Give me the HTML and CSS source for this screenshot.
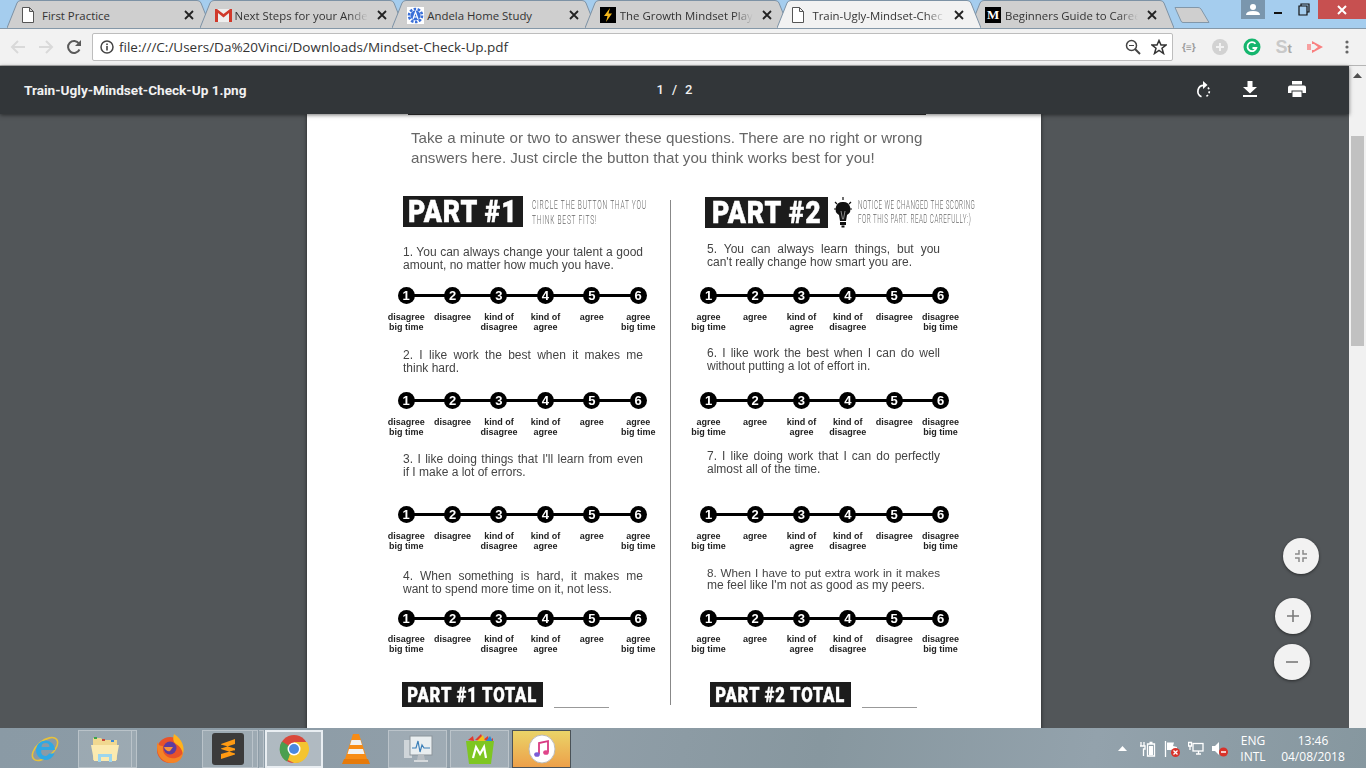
FILE: index.html
```html
<!DOCTYPE html>
<html lang="en">
<head>
<meta charset="utf-8">
<title>Mindset-Check-Up.pdf</title>
<link rel="stylesheet" href="styles.css">
</head>
<body>
<svg class="defs" width="0" height="0" aria-hidden="true">
  <symbol id="tabshape" viewBox="0 0 204 28" preserveAspectRatio="none">
    <path d="M0 28 L10 3 Q11 .5 14 .5 L190 .5 Q193 .5 194 3 L204 28"/>
  </symbol>
  <symbol id="docicon" viewBox="0 0 12 16">
    <path d="M.5.5H7.5L11.5 4.5V15.5H.5ZM7.5.5V4.5H11.5" fill="#fff" stroke="#555" stroke-width="1"/>
  </symbol>
  <symbol id="closeicon" viewBox="0 0 10 10">
    <path d="M1 1L9 9M9 1L1 9" stroke="#222" stroke-width="1.8" fill="none"/>
  </symbol>
</svg>

<header class="tabbar">
  <div class="tab">
    <svg class="tab-shape"><use href="#tabshape"/></svg>
    <span class="favicon"><svg class="doc" width="12" height="16"><use href="#docicon"/></svg></span>
    <span class="tab-title">First Practice</span>
    <svg class="tab-close" width="10" height="10"><use href="#closeicon"/></svg>
  </div>
  <div class="tab">
    <svg class="tab-shape"><use href="#tabshape"/></svg>
    <span class="favicon"><svg width="17" height="14" viewBox="0 0 17 14"><rect y="1" width="17" height="13" fill="#eee"/><path d="M0 1V14H3V5L8.500 9.500L14 5V14H17V1H15L8.500 6L2 1Z" fill="#d0392b"/></svg></span>
    <span class="tab-title fade">Next Steps for your Ande</span>
    <svg class="tab-close" width="10" height="10"><use href="#closeicon"/></svg>
  </div>
  <div class="tab">
    <svg class="tab-shape"><use href="#tabshape"/></svg>
    <span class="favicon"><svg width="17" height="17" viewBox="0 0 17 17"><rect width="17" height="17" fill="#fff"/><circle cx="8.500" cy="8.500" r="6.500" fill="none" stroke="#3a6fd8" stroke-width="2.600" stroke-dasharray="2.500 1.500"/><circle cx="8.500" cy="8.500" r="5" fill="#3a6fd8"/><path d="M6 12L8.500 5L11 12M7 10H10" stroke="#fff" stroke-width="1.200" fill="none"/></svg></span>
    <span class="tab-title">Andela Home Study</span>
    <svg class="tab-close" width="10" height="10"><use href="#closeicon"/></svg>
  </div>
  <div class="tab">
    <svg class="tab-shape"><use href="#tabshape"/></svg>
    <span class="favicon"><svg width="16" height="16" viewBox="0 0 16 16"><rect width="16" height="16" fill="#000"/><path d="M10 1L4 9H7.500L6 15L12 6.500H8.500Z" fill="#f5b81c"/></svg></span>
    <span class="tab-title fade">The Growth Mindset Play</span>
    <svg class="tab-close" width="10" height="10"><use href="#closeicon"/></svg>
  </div>
  <div class="tab active">
    <svg class="tab-shape"><use href="#tabshape"/></svg>
    <span class="favicon"><svg class="doc" width="12" height="16"><use href="#docicon"/></svg></span>
    <span class="tab-title fade">Train-Ugly-Mindset-Chec</span>
    <svg class="tab-close" width="10" height="10"><use href="#closeicon"/></svg>
  </div>
  <div class="tab">
    <svg class="tab-shape"><use href="#tabshape"/></svg>
    <span class="favicon medium">M</span>
    <span class="tab-title fade">Beginners Guide to Caree</span>
    <svg class="tab-close" width="10" height="10"><use href="#closeicon"/></svg>
  </div>
  <svg class="newtab" width="36" height="18" viewBox="0 0 36 18"><path d="M1 1.500H24Q26 1.500 27 3L35 16.500H9Q7.500 16.500 7 15Z" fill="#cfcfcf" stroke="#8297a9"/></svg>
  <div class="winctl">
    <span class="profile"><svg width="14" height="14" viewBox="0 0 14 14"><circle cx="7" cy="4" r="3" fill="#fff"/><path d="M0 12Q0 8 7 8Q14 8 14 12Z" fill="#fff"/></svg></span>
    <span class="wbtn"><svg width="12" height="12" viewBox="0 0 12 12"><rect x="2" y="8" width="8" height="2" fill="#111"/></svg></span>
    <span class="wbtn"><svg width="12" height="14" viewBox="0 0 12 14"><path d="M3 3V1H11V9H9M1 3H9V12H1Z" fill="none" stroke="#111" stroke-width="1.200"/></svg></span>
    <span class="wclose"><svg width="12" height="12" viewBox="0 0 12 12"><path d="M2 2L10 10M10 2L2 10" stroke="#fff" stroke-width="2"/></svg></span>
  </div>
</header>

<nav class="toolbar">
  <span class="navbtn"><svg width="16" height="16" viewBox="0 0 16 16"><path d="M15 8H2M8 2L2 8L8 14" fill="none" stroke="#d9d9d9" stroke-width="2"/></svg></span>
  <span class="navbtn"><svg width="16" height="16" viewBox="0 0 16 16"><path d="M1 8H14M8 2L14 8L8 14" fill="none" stroke="#d9d9d9" stroke-width="2"/></svg></span>
  <span class="navbtn"><svg width="16" height="16" viewBox="0 0 16 16"><path d="M13.500 10.500A6 6 0 1 1 13 4.500" fill="none" stroke="#5a5a5a" stroke-width="2"/><path d="M15 1V7H9Z" fill="#5a5a5a"/></svg></span>
  <div class="omnibox">
    <svg class="info" width="14" height="14" viewBox="0 0 14 14"><circle cx="7" cy="7" r="6" fill="none" stroke="#444" stroke-width="1.500"/><rect x="6.200" y="6" width="1.600" height="4.500" fill="#444"/><rect x="6.200" y="3.500" width="1.600" height="1.600" fill="#444"/></svg>
    <span class="url">file:///C:/Users/Da%20Vinci/Downloads/Mindset-Check-Up.pdf</span>
    <svg width="16" height="16" viewBox="0 0 16 16"><circle cx="6.500" cy="6.500" r="5" fill="none" stroke="#444" stroke-width="1.500"/><path d="M10 10L15 15" stroke="#444" stroke-width="2"/><path d="M4 6.500H9" stroke="#444"/></svg>
    <svg class="star" width="16" height="16" viewBox="0 0 16 16"><path d="M8 1.500L10 6H15L11 9.200L12.500 14.500L8 11.500L3.500 14.500L5 9.200L1 6H6Z" fill="none" stroke="#333" stroke-width="1.500"/></svg>
  </div>
  <div class="exts">
    <span class="ext braces">{≡}</span>
    <span class="ext"><svg width="18" height="18" viewBox="0 0 18 18"><circle cx="9" cy="9" r="8" fill="#d2d2d2"/><path d="M9 5V13M5 9H13" stroke="#f2f2f2" stroke-width="2"/></svg></span>
    <span class="ext"><svg width="18" height="18" viewBox="0 0 18 18"><circle cx="9" cy="9" r="8.500" fill="#15b66e"/><path d="M12.500 5.800A4.500 4.500 0 1 0 13.300 10H9.500" fill="none" stroke="#fff" stroke-width="1.800"/></svg></span>
    <span class="ext st">S<small>t</small></span>
    <span class="ext"><svg width="18" height="14" viewBox="0 0 18 14"><path d="M1 4H5V10H1Z" fill="#f7a0a0"/><path d="M6 1L17 7L6 13V10H8L12 7L8 4H6Z" fill="#f98080"/></svg></span>
    <span class="ext"><svg width="4" height="14" viewBox="0 0 4 14"><circle cx="2" cy="2" r="1.600" fill="#666"/><circle cx="2" cy="7" r="1.600" fill="#666"/><circle cx="2" cy="12" r="1.600" fill="#666"/></svg></span>
  </div>
</nav>

<div class="main">
  <div class="content">
    <div class="pdfbar">
      <div class="pdftitle">Train-Ugly-Mindset-Check-Up 1.png</div>
      <div class="pagecount"><span>1</span><span>/</span><span>2</span></div>
      <div class="pdfactions">
        <span class="pdfbtn"><svg width="16" height="18" viewBox="0 0 16 18"><path d="M9 4.300A6 6 0 0 0 6.500 15.800" fill="none" stroke="#fff" stroke-width="1.700"/><path d="M8 0V8L12.500 4Z" fill="#fff"/><path d="M13 6.500A6 6 0 0 1 10.500 15.800" fill="none" stroke="#fff" stroke-width="1.700" stroke-dasharray="2 2"/></svg></span>
        <span class="pdfbtn"><svg width="14" height="16" viewBox="0 0 14 16"><path d="M4.500 0H9.500V6H14L7 12.500L0 6H4.500Z" fill="#fff"/><rect y="14" width="14" height="2" fill="#fff"/></svg></span>
        <span class="pdfbtn"><svg width="18" height="16" viewBox="0 0 18 16"><path d="M4 0H14V3.500H4ZM2 4.500H16Q18 4.500 18 6.500V12H14.500V9.500H3.500V12H0V6.500Q0 4.500 2 4.500ZM4.500 10.500H13.500V16H4.500Z" fill="#fff"/></svg></span>
      </div>
    </div>

    <div class="viewer">
      <article class="page">
        <div class="page-inner">
          <div class="headrule"></div>
          <p class="intro"><span class="l1">Take a minute or two to answer these questions. There are no right or wrong</span> answers here. Just circle the button that you think works best for you!</p>

          <div class="cols">
            <section class="col col-left">
              <div class="parthead">
                <div class="badge"><span>PART #1</span></div>
                <div class="note note-left"><span>CIRCLE THE BUTTON THAT YOU</span><span>THINK BEST FITS!</span></div>
              </div>

              <div class="q q1">
                <p class="qtext"><span class="l1">1. You can always change your talent a good</span> amount, no matter how much you have.</p>
                <div class="scale">
                  <div class="dots"><b>1</b><b>2</b><b>3</b><b>4</b><b>5</b><b>6</b></div>
                  <div class="labels"><span>disagree big time</span><span>disagree</span><span>kind of disagree</span><span>kind of agree</span><span>agree</span><span>agree big time</span></div>
                </div>
              </div>
              <div class="q q2">
                <p class="qtext"><span class="l1">2. I like work the best when it makes me</span> think hard.</p>
                <div class="scale">
                  <div class="dots"><b>1</b><b>2</b><b>3</b><b>4</b><b>5</b><b>6</b></div>
                  <div class="labels"><span>disagree big time</span><span>disagree</span><span>kind of disagree</span><span>kind of agree</span><span>agree</span><span>agree big time</span></div>
                </div>
              </div>
              <div class="q q3">
                <p class="qtext"><span class="l1">3. I like doing things that I'll learn from even</span> if I make a lot of errors.</p>
                <div class="scale">
                  <div class="dots"><b>1</b><b>2</b><b>3</b><b>4</b><b>5</b><b>6</b></div>
                  <div class="labels"><span>disagree big time</span><span>disagree</span><span>kind of disagree</span><span>kind of agree</span><span>agree</span><span>agree big time</span></div>
                </div>
              </div>
              <div class="q q4">
                <p class="qtext"><span class="l1">4. When something is hard, it makes me</span> want to spend more time on it, not less.</p>
                <div class="scale">
                  <div class="dots"><b>1</b><b>2</b><b>3</b><b>4</b><b>5</b><b>6</b></div>
                  <div class="labels"><span>disagree big time</span><span>disagree</span><span>kind of disagree</span><span>kind of agree</span><span>agree</span><span>agree big time</span></div>
                </div>
              </div>

              <div class="total total-left">
                <div class="totalbadge"><span>PART #1 TOTAL</span></div>
                <div class="blank"></div>
              </div>
            </section>

            <div class="divider"></div>

            <section class="col col-right">
              <div class="parthead">
                <div class="badge badge-right"><span>PART #2</span></div>
                <svg class="bulb" width="18" height="31" viewBox="0 0 18 31"><path d="M1 5L3 7M9 0V3M17 5L15 7M0 12H2M16 12H18" stroke="#111" stroke-width="1.200"/><path d="M9 5A7 7 0 0 0 5 18L6 24H12L13 18A7 7 0 0 0 9 5Z" fill="#111"/><path d="M7 14L8.500 22H9.500L11 14" stroke="#888" fill="none"/><rect x="6" y="25" width="6" height="3" fill="#111"/><rect x="7.500" y="28.500" width="3" height="2" fill="#111"/></svg>
                <div class="note note-right"><span>NOTICE WE CHANGED THE SCORING</span><span>FOR THIS PART. READ CAREFULLY:)</span></div>
              </div>

              <div class="q q5">
                <p class="qtext"><span class="l1">5. You can always learn things, but you</span> can't really change how smart you are.</p>
                <div class="scale">
                  <div class="dots"><b>1</b><b>2</b><b>3</b><b>4</b><b>5</b><b>6</b></div>
                  <div class="labels"><span>agree big time</span><span>agree</span><span>kind of agree</span><span>kind of disagree</span><span>disagree</span><span>disagree big time</span></div>
                </div>
              </div>
              <div class="q q6">
                <p class="qtext"><span class="l1">6. I like work the best when I can do well</span> without putting a lot of effort in.</p>
                <div class="scale">
                  <div class="dots"><b>1</b><b>2</b><b>3</b><b>4</b><b>5</b><b>6</b></div>
                  <div class="labels"><span>agree big time</span><span>agree</span><span>kind of agree</span><span>kind of disagree</span><span>disagree</span><span>disagree big time</span></div>
                </div>
              </div>
              <div class="q q7">
                <p class="qtext"><span class="l1">7. I like doing work that I can do perfectly</span> almost all of the time.</p>
                <div class="scale">
                  <div class="dots"><b>1</b><b>2</b><b>3</b><b>4</b><b>5</b><b>6</b></div>
                  <div class="labels"><span>agree big time</span><span>agree</span><span>kind of agree</span><span>kind of disagree</span><span>disagree</span><span>disagree big time</span></div>
                </div>
              </div>
              <div class="q q8">
                <p class="qtext"><span class="l1 tight">8. When I have to put extra work in it makes</span> me feel like I'm not as good as my peers.</p>
                <div class="scale">
                  <div class="dots"><b>1</b><b>2</b><b>3</b><b>4</b><b>5</b><b>6</b></div>
                  <div class="labels"><span>agree big time</span><span>agree</span><span>kind of agree</span><span>kind of disagree</span><span>disagree</span><span>disagree big time</span></div>
                </div>
              </div>

              <div class="total total-right">
                <div class="totalbadge"><span>PART #2 TOTAL</span></div>
                <div class="blank"></div>
              </div>
            </section>
          </div>
        </div>
      </article>

      <button class="fab fab-fit" type="button"><svg width="14" height="14" viewBox="0 0 14 14"><path d="M5 1V5H1M9 1V5H13M5 13V9H1M9 13V9H13" fill="none" stroke="#8a8a8a" stroke-width="1.500"/></svg></button>
      <button class="fab fab-plus" type="button"><svg width="14" height="14" viewBox="0 0 14 14"><path d="M7 1V13M1 7H13" stroke="#7a7a7a" stroke-width="1.600"/></svg></button>
      <button class="fab fab-minus" type="button"><svg width="14" height="14" viewBox="0 0 14 14"><path d="M1 7H13" stroke="#7a7a7a" stroke-width="1.600"/></svg></button>
    </div>
  </div>

  <aside class="scrollbar">
    <svg class="scroll-up" width="9" height="5" viewBox="0 0 9 5"><path d="M4.500 0L9 5H0Z" fill="#505050"/></svg>
    <div class="thumb"></div>
  </aside>
</div>

<footer class="taskbar">
  <div class="tb-apps">
    <span class="app app-ie"><svg width="32" height="32" viewBox="0 0 32 32"><ellipse cx="16" cy="16" rx="15" ry="8" transform="rotate(-40 16 16)" fill="none" stroke="#e8c23a" stroke-width="1.600"/><path d="M7 17A9.500 9.500 0 0 1 26 17H12.500A4 4 0 0 0 20 20.500H25.500A9.500 9.500 0 0 1 7 17ZM12.500 14H20.500A4 4 0 0 0 12.500 14Z" fill="#2fa8e4" fill-rule="evenodd"/></svg></span>
    <span class="app app-btn app-explorer"><svg width="32" height="30" viewBox="0 0 32 30"><path d="M4 4H12L14 6H28V26H4Z" fill="#f0d890"/><path d="M2 11H30L27 27H5Z" fill="#fbeab0"/><rect x="5" y="3" width="3" height="2" fill="#3ca54a"/><rect x="13" y="5" width="3" height="2" fill="#c84a3a"/><rect x="22" y="6" width="3" height="2" fill="#3a8ad8"/><path d="M9 28V20H23V28H20V23H12V28Z" fill="#9cd6ee"/></svg></span>
    <span class="app-pane"></span>
    <span class="app app-ff"><svg width="32" height="32" viewBox="0 0 32 32"><circle cx="16" cy="17" r="13" fill="#e8522a"/><path d="M20 1C28 6 31 14 29 21C27 12 22 12 20 9C19 7 19 4 20 1Z" fill="#ffb21c"/><path d="M3 14C3 24 10 30 18 30C25 30 29 25 29 19C27 24 22 26 17 25C11 24 8 19 9 13C6 13 4 12 4 9C3 11 3 12 3 14Z" fill="#f58426"/><circle cx="16" cy="15" r="6.500" fill="#5d3c9e"/><path d="M10 14H19L16 18C14 19 11 17 10 14Z" fill="#f6923a"/></svg></span>
    <span class="app app-btn app-sublime"><span class="sublime-box"><svg width="16" height="22" viewBox="0 0 16 22"><path d="M15 1V6L1 10.500V6ZM1 11L15 15.500V10.500L1 6.500ZM15 12V16.500L1 21V16Z" fill="#ff9a12"/></svg></span></span>
    <span class="app-pane"></span><span class="app-pane pane-gap"></span>
    <span class="app app-btn app-chrome"><svg width="30" height="30" viewBox="0 0 30 30"><circle cx="15" cy="15" r="14" fill="#d9483b"/><path d="M15 15L8 27.500A14 14 0 0 1 3 7.500Z" fill="#4a9f50"/><path d="M15 8H28A14 14 0 0 1 15 29L9 26Z" fill="#f4c430"/><circle cx="15" cy="15" r="6.500" fill="#fff"/><circle cx="15" cy="15" r="5" fill="#4a88e0"/></svg></span>
    <span class="app app-vlc"><svg width="28" height="32" viewBox="0 0 28 32"><path d="M11 1H17L25 26H3Z" fill="#f78b14"/><path d="M9.500 7H18.500L20 12H8ZM7 16H21L22.500 21H5.500Z" fill="#f1f1f1"/><path d="M2 26H26L28 31H0Z" fill="#e67a0a"/></svg></span>
    <span class="app app-btn app-monitor"><svg width="32" height="30" viewBox="0 0 32 30"><rect x="2" y="6" width="8" height="18" fill="#cfd5d9"/><rect x="8" y="2" width="22" height="19" fill="#e9eef0" stroke="#8c959b"/><path d="M10 14L14 14L16 7L18 18L20 11L22 14H28" fill="none" stroke="#3b7fb8" stroke-width="1.200"/><path d="M16 21H22L23 26H15Z" fill="#b7bdc2"/><rect x="12" y="26" width="14" height="2" fill="#d5d9dc"/></svg></span>
    <span class="app app-btn app-mobo"><svg width="32" height="32" viewBox="0 0 32 32"><path d="M4 7L9 3L10 8ZM11 7L17 1L20 8ZM19 7L24 3L25 8ZM25 8L29 5V10Z" fill="#e23a2e"/><path d="M13 8L19 2L21 8Z" fill="#f2c21e"/><path d="M22 8L26 3L29 9Z" fill="#2a89d8"/><path d="M2 8H30L27 31H5Z" fill="#7ec622"/><path d="M9 25L12 14L16 21L20 14L22 25" fill="none" stroke="#fff" stroke-width="2.200"/></svg></span>
    <span class="app app-itunes"><svg width="28" height="30" viewBox="0 0 28 30"><ellipse cx="14" cy="15" rx="13" ry="14" fill="#fff" stroke="#bbb"/><path d="M11 20V9L20 7V18" fill="none" stroke="#d83a82" stroke-width="1.800"/><ellipse cx="9" cy="20.500" rx="2.800" ry="2.300" fill="#7a5cd6"/><ellipse cx="18" cy="18.500" rx="2.800" ry="2.300" fill="#e0458a"/></svg></span>
  </div>
  <div class="tray">
    <svg class="tray-up" width="9" height="5" viewBox="0 0 9 5"><path d="M4.500 0L9 5H0Z" fill="#fff"/></svg>
    <svg class="tray-icon" width="16" height="16" viewBox="0 0 16 16"><path d="M1 1V5M4 1V5M0 5H5V8H3.500V15M7.500 3H14.500V15H7.500ZM9.500 1.500H12.500" fill="none" stroke="#fff" stroke-width="1.300"/><rect x="9" y="5" width="4" height="9" fill="#fff"/></svg>
    <svg class="tray-icon" width="16" height="16" viewBox="0 0 16 16"><path d="M1.500 0V16" stroke="#fff" stroke-width="1.300"/><path d="M3 1.500H10L9 5L13 6V9H3Z" fill="#fff"/><circle cx="11.500" cy="11.500" r="4.500" fill="#d8322a"/><path d="M9.500 9.500L13.500 13.500M13.500 9.500L9.500 13.500" stroke="#fff" stroke-width="1.300"/></svg>
    <svg class="tray-icon" width="16" height="16" viewBox="0 0 16 16"><rect x="5" y="2.500" width="10" height="7.500" fill="none" stroke="#fff" stroke-width="1.300"/><path d="M8 13H13M10.500 10V13M0.500 1.500H3.500V5H.5ZM2 5V9" fill="none" stroke="#fff" stroke-width="1.300"/></svg>
    <svg class="tray-icon" width="16" height="16" viewBox="0 0 16 16"><path d="M0 5H3L7 1V14L3 10H0Z" fill="#fff"/><circle cx="11.500" cy="11" r="4.500" fill="#d8322a"/><path d="M9 11H14" stroke="#fff" stroke-width="1.500"/></svg>
    <div class="lang"><span>ENG</span><span>INTL</span></div>
    <div class="clock"><span>13:46</span><span>04/08/2018</span></div>
  </div>
</footer>
</body>
</html>
```

FILE: styles.css
```css
* { box-sizing: border-box; }
html, body { margin: 0; height: 100%; }
body {
  width: 1366px;
  height: 768px;
  overflow: hidden;
  display: flex;
  flex-direction: column;
  font-family: "Open Sans", "Liberation Sans", sans-serif;
  background: #f2f2f2;
}
.defs { position: absolute; }

/* Tab strip */
.tabbar {
  height: 29px;
  flex: none;
  display: flex;
  align-items: flex-start;
  padding-left: 7px;
  background: #a5cdee;
  border-bottom: 1px solid #8598a8;
  position: relative;
}
.tab {
  position: relative;
  flex: none;
  width: 204px;
  height: 29px;
  margin-right: -11.4px;
  padding: 1px 0 0 15px;
  display: flex;
  align-items: center;
  font-size: 11.4px;
  color: #222;
}
.tab-shape { position: absolute; left: 0; top: 0; width: 204px; height: 28px; fill: #cfcfcf; stroke: #7d92a5; stroke-width: 1; overflow: visible; }
.tab.active { z-index: 2; height: 30px; padding-bottom: 1px; }
.tab.active .tab-shape { fill: #f2f2f2; }
.favicon { position: relative; flex: none; width: 20px; display: flex; align-items: center; }
.favicon .doc { margin-right: 8px; }
.medium { width: 16px; height: 16px; margin-right: 4px; background: #000; color: #fff; justify-content: center; font: bold 13px "Liberation Serif", serif; }
.tab-title { position: relative; width: 133px; white-space: nowrap; color: #333; }
.tab-title.fade { -webkit-mask-image: linear-gradient(to right, #000 85%, transparent 100%); mask-image: linear-gradient(to right, #000 85%, transparent 100%); }
.tab-close { position: relative; margin-left: 9px; flex: none; }
.newtab { flex: none; margin: 6px 0 0 11px; }
.winctl { position: absolute; top: 0; right: 0; display: flex; align-items: flex-start; }
.profile { width: 24px; height: 19px; background: #7a96ad; display: flex; align-items: center; justify-content: center; }
.wbtn { width: 26px; height: 19px; display: flex; align-items: center; justify-content: center; }
.wclose { width: 48px; height: 19px; margin-left: 1px; background: #c75050; display: flex; align-items: center; justify-content: center; }

/* Address row */
.toolbar {
  height: 37px;
  flex: none;
  display: flex;
  align-items: center;
  padding-left: 4px;
  background: #f2f2f2;
  border-bottom: 1px solid #b5b5b5;
}
.navbtn { width: 28px; display: flex; justify-content: center; flex: none; }
.omnibox {
  width: 1081px;
  height: 28px;
  margin-left: 4px;
  flex: none;
  background: #fff;
  border: 1px solid #bdbdbd;
  border-radius: 2px;
  display: flex;
  align-items: center;
  padding: 0 5px 0 7px;
}
.url { flex: 1; margin-left: 5px; font-size: 13.5px; color: #333; white-space: nowrap; }
.star { margin-left: 10px; }
.exts { flex: 1; display: grid; grid-template-columns: repeat(6, 31.6px); align-items: center; justify-items: center; }
.ext { display: flex; align-items: baseline; justify-content: center; }
.braces { font-size: 10px; font-weight: 700; color: #9a9a9a; }
.st { font: bold 18px "Liberation Sans", sans-serif; color: #c9c9c9; }
.st small { font-size: 13px; color: #a9a9a9; }

/* Main area */
.main { flex: 1; display: flex; min-height: 0; }
.content { flex: 1; display: flex; flex-direction: column; min-width: 0; position: relative; }
.pdfbar {
  height: 48px;
  flex: none;
  display: grid;
  grid-template-columns: 1fr auto 1fr;
  align-items: center;
  padding-left: 24px;
  background: #323639;
  box-shadow: 0 1px 4px rgba(0,0,0,.55);
  position: relative;
  z-index: 3;
  color: #f1f1f1;
}
.pdftitle { font: bold 13.6px Roboto, sans-serif; white-space: nowrap; }
.pagecount { display: flex; gap: 8px; font: 500 13px Roboto, sans-serif; margin: -1px 0 0 -24px; }
.pdfactions { display: flex; justify-content: flex-end; padding-right: 28.5px; }
.pdfbtn { width: 47px; display: flex; justify-content: center; }
.viewer { flex: 1; min-height: 0; background: #525659; padding-left: 307px; position: relative; overflow: hidden; }
.page { width: 734px; height: 640px; background: #fff; box-shadow: 0 0 4px rgba(0,0,0,.6); }
.page-inner { padding: 0 0 0 96px; filter: blur(.3px); font-family: "Liberation Sans", Arial, sans-serif; }
.headrule { width: 518px; height: 1px; margin-left: 5px; background: #333; }
.intro { margin: 13px 0 0 8px; width: 508px; font-size: 15.15px; line-height: 20px; color: #666; }

.cols { display: grid; grid-template-columns: 267px 1px 1fr; margin-top: 28px; }
.col-right { padding-left: 36px; }
.divider { height: 505px; margin-top: 4px; background: #888; }
.parthead { display: flex; height: 33px; align-items: flex-start; }
.badge { flex: none; width: 120px; height: 31px; background: #1c1c1c; color: #fff; display: flex; align-items: center; justify-content: center; font: 900 31px Roboto, sans-serif; }
.badge span { display: block; white-space: nowrap; transform: scaleX(.86); letter-spacing: 1px; -webkit-text-stroke: .5px #fff; }
.badge-right { width: 123px; margin: 1px 0 0 -2px; }
.bulb { flex: none; margin: 1px 0 0 6px; }
.note { display: flex; flex-direction: column; font: 300 13px/15px Roboto, sans-serif; color: #666; white-space: nowrap; min-width: 0; }
.note span { display: block; transform-origin: left center; }
.note-left { margin: 1px 0 0 9px; }
.note-left span { transform: scaleX(.51); letter-spacing: 1.5px; }
.note-right { margin: 2px 0 0 6px; line-height: 14px; }
.note-right span { transform: scaleX(.48); letter-spacing: 1px; }

.qtext { margin: 0; font-size: 12px; line-height: 13px; color: #444; width: 240px; }
.l1 { display: block; white-space: nowrap; text-align: justify; text-align-last: justify; }
.tight { font-size: 11.7px; }
.col-right .qtext { width: 233px; }
.scale { margin-left: -20px; width: 278.4px; }
.col-right .scale { margin-left: -21.6px; }
.dots { display: grid; grid-template-columns: repeat(6, 1fr); justify-items: center; height: 17px; position: relative; }
.dots::before { content: ""; position: absolute; left: 23px; right: 23px; top: 7px; height: 3px; background: #000; }
.dots b { position: relative; width: 17px; height: 17px; border-radius: 50%; background: #000; color: #fff; font-size: 13px; line-height: 17px; text-align: center; }
.labels { display: grid; grid-template-columns: repeat(6, 1fr); margin-top: 8px; font-size: 9px; font-weight: 700; line-height: 10px; color: #222; text-align: center; }
.labels span { padding: 0 4px; }

.q1 { margin-top: 17px; } .q1 .scale { margin-top: 15px; }
.q2 { margin-top: 17px; } .q2 .scale { margin-top: 17px; }
.q3 { margin-top: 16px; } .q3 .scale { margin-top: 27px; }
.q4 { margin-top: 19px; } .q4 .scale { margin-top: 14px; }
.q4 .labels { margin-top: 7px; }
.q5 { margin-top: 14px; } .q5 .scale { margin-top: 18px; }
.q6 { margin-top: 15px; } .q6 .scale { margin-top: 19px; }
.q7 { margin-top: 13px; } .q7 .scale { margin-top: 30px; }
.q8 { margin-top: 15px; } .q8 .scale { margin-top: 18px; }
.q8 .labels { margin-top: 7px; }

.total { display: flex; align-items: flex-end; margin-top: 28px; }
.total-right { margin-left: 3px; }
.totalbadge { width: 141px; height: 25px; background: #1c1c1c; color: #fff; display: flex; align-items: center; justify-content: center; font: 900 20px Roboto, sans-serif; white-space: nowrap; }
.totalbadge span { transform: scaleX(.83); letter-spacing: 1px; -webkit-text-stroke: .4px #fff; }
.blank { width: 55px; height: 1px; margin: 0 0 -1px 11px; background: #999; }
.total-left { margin-left: -1px; }

/* Overlay buttons */
.fab { position: absolute; width: 36px; height: 36px; padding: 0; border: 0; border-radius: 50%; background: #f2f2f2; box-shadow: 0 1px 3px rgba(0,0,0,.5); display: flex; align-items: center; justify-content: center; }
.fab-fit { left: 1283px; top: 424px; }
.fab-plus { left: 1275px; top: 484px; }
.fab-minus { left: 1274px; top: 530px; }

/* Scrollbar */
.scrollbar { width: 17px; flex: none; background: #f1f1f1; padding: 7px 2px 0; display: flex; flex-direction: column; align-items: center; }
.scroll-up { flex: none; }
.thumb { width: 13px; height: 210px; margin-top: 58px; background: #c1c1c1; }

/* Taskbar */
.taskbar {
  height: 40px;
  flex: none;
  display: flex;
  justify-content: space-between;
  background: linear-gradient(100deg, #8a9aa5 0%, #919fa9 40%, #87979f 60%, #93a2ac 80%, #86979f 100%);
  color: #fff;
}
.tb-apps { display: flex; align-items: stretch; padding: 2px 0 0 29px; }
.app { display: flex; align-items: center; justify-content: center; flex: none; }
.app-ie { width: 32px; margin-right: 17px; }
.app-btn { background: rgba(255,255,255,.14); border: 1px solid rgba(255,255,255,.3); }
.app-explorer { width: 54px; }
.app-pane { width: 5px; flex: none; background: rgba(255,255,255,.14); border: 1px solid rgba(255,255,255,.3); border-left: 0; }
.pane-gap { margin: 0 1px; }
.app-ff { width: 65px; }
.app-sublime { width: 51px; }
.sublime-box { width: 32px; height: 32px; border-radius: 3px; background: #3b3b3b; display: flex; align-items: center; justify-content: center; }
.app-chrome { width: 58px; background: rgba(255,255,255,.3); border: 2px solid #e9eef2; }
.app-vlc { width: 65px; }
.app-monitor { width: 59px; }
.app-mobo { width: 59px; margin-left: 3px; }
.app-itunes { width: 59px; margin-left: 3px; background: linear-gradient(#ead468, #eda04a); border: 1px solid #4a5258; }
.tray { display: flex; align-items: center; padding: 1px 18px 0 0; font-size: 12px; }
.tray-up { margin-right: 13px; }
.tray-icon { margin-right: 8px; }
.lang { display: flex; flex-direction: column; align-items: center; width: 36px; margin-left: -1px; line-height: 16px; }
.clock { display: flex; flex-direction: column; align-items: center; width: 70px; margin-left: 7px; line-height: 16px; }
```
